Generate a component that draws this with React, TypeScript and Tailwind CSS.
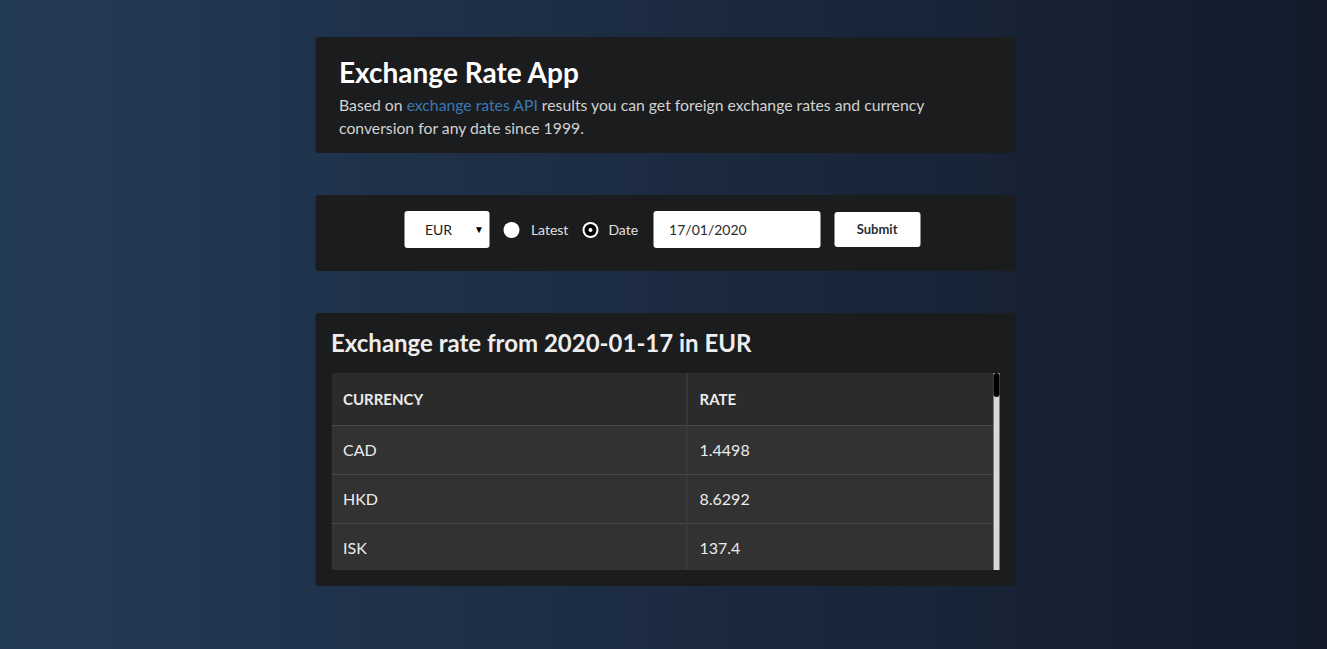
const rates = [
  { code: "CAD", rate: "1.4498" },
  { code: "HKD", rate: "8.6292" },
  { code: "ISK", rate: "137.4" },
  { code: "PHP", rate: "56.373" },
  { code: "DKK", rate: "7.4726" },
];

const Radio = ({ checked }: { checked?: boolean }) => (
  <span className="flex h-[16px] w-[16px] items-center justify-center rounded-full bg-white">
    {checked && (
      <span className="flex h-[12px] w-[12px] items-center justify-center rounded-full bg-black">
        <span className="h-[4px] w-[4px] rounded-full bg-white" />
      </span>
    )}
  </span>
);

const App = () => {
  return (
    <div
      className="min-h-screen w-full bg-gradient-to-r from-[#243b57] to-[#131b2b] pt-[37px] pb-10 text-white"
      style={{ fontFamily: "Lato, 'Open Sans', sans-serif" }}
    >
      <div className="mx-auto flex w-[700px] translate-x-[1.5px] flex-col gap-[42px]">
        <div className="rounded-[3px] bg-[#1b1c1e] px-6 pt-[15px] pb-[14px]">
          <h1 className="text-[28px] font-bold leading-[40px] text-white">
            Exchange Rate App
          </h1>
          <p className="mt-[1px] pr-4 text-[15.75px] leading-[23px] text-[#d2d2d2]">
            Based on{" "}
            <a href="#" className="text-[#3b78b4]">
              exchange rates API
            </a>{" "}
            results you can get foreign exchange rates and currency conversion
            for any date since 1999.
          </p>
        </div>

        <div className="flex h-[76px] items-start justify-center rounded-[3px] bg-[#1b1c1e] pt-[16px] pr-[5px]">
          <div className="flex h-[37px] w-[85px] items-center justify-between rounded-[3px] bg-white pl-5 pr-[6px] text-[14px] text-[#1c1c1c]">
            <span>EUR</span>
            <span className="text-[10px] text-black">▼</span>
          </div>
          <label className="ml-[14px] flex h-[37px] items-center gap-[11px] text-[14px] text-[#e0e0e0]">
            <Radio />
            Latest
          </label>
          <label className="ml-[14px] flex h-[37px] items-center gap-[10px] text-[14px] text-[#e0e0e0]">
            <Radio checked />
            Date
          </label>
          <div className="ml-[15px] flex h-[37px] w-[167px] items-center rounded-[3px] bg-white pl-4 text-[14px] text-[#2a2a2a]">
            17/01/2020
          </div>
          <button className="ml-[14px] mt-[1px] h-[35px] w-[86px] rounded-[3px] bg-white text-[13px] font-bold text-[#2a2f36]">
            Submit
          </button>
        </div>

        <div className="rounded-[3px] bg-[#1b1c1e] px-4 pt-[15px] pb-[16px]">
          <h2 className="text-[24px] font-bold leading-[30px] text-[#ededed]">
            Exchange rate from 2020-01-17 in EUR
          </h2>
          <div className="mt-[15px] flex h-[197px]">
            <div className="flex-1 overflow-hidden">
              <table className="w-full border-collapse text-left text-[16px] text-[#ececec]">
                <thead>
                  <tr className="h-[52px] bg-[#2b2b2b]">
                    <th className="w-[356px] border-r border-[#444] pl-3 text-[15px] font-bold uppercase">
                      Currency
                    </th>
                    <th className="pl-3 text-[15px] font-bold uppercase">Rate</th>
                  </tr>
                </thead>
                <tbody>
                  {rates.map((r) => (
                    <tr key={r.code} className="h-[49px] border-t border-[#494949] bg-[#323232]">
                      <td className="border-r border-[#444] pl-3">{r.code}</td>
                      <td className="pl-3">{r.rate}</td>
                    </tr>
                  ))}
                </tbody>
              </table>
            </div>
            <div className="w-[6px] bg-[#d9d9d9]">
              <div className="h-[24px] rounded-[3px] bg-black" />
            </div>
          </div>
        </div>
      </div>
    </div>
  );
};

export default App;
